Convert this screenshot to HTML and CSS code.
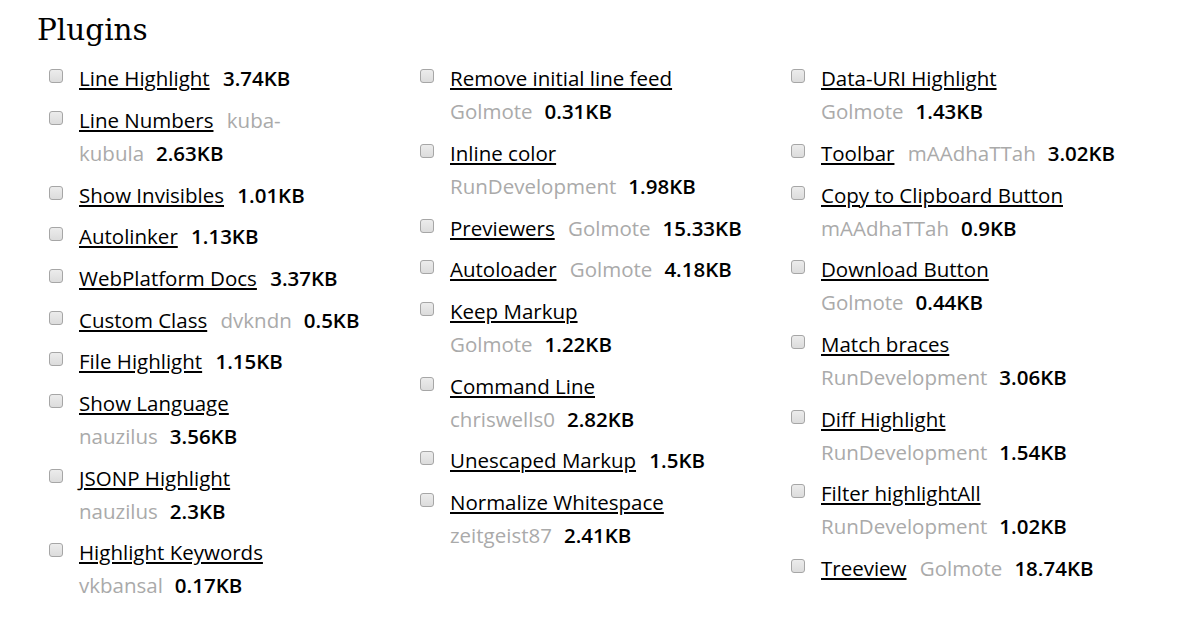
FILE: index.html
```html
<!DOCTYPE html>
<html>
<head>
<meta charset="utf-8">
<title>Plugins</title>
<link rel="stylesheet" href="styles.css">
</head>
<body>
<section class="options">
  <h1 class="title">Plugins</h1>
  <div class="grid">
    <div class="col">
      <label class="item"><span class="box"></span><span class="txt"><a class="name" href="#">Line Highlight</a> <strong class="size">3.74KB</strong></span></label>
      <label class="item"><span class="box"></span><span class="txt"><a class="name" href="#">Line Numbers</a> <span class="owner">kuba-</span><span class="owner">kubula</span><strong class="size">2.63KB</strong></span></label>
      <label class="item"><span class="box"></span><span class="txt"><a class="name" href="#">Show Invisibles</a> <strong class="size">1.01KB</strong></span></label>
      <label class="item"><span class="box"></span><span class="txt"><a class="name" href="#">Autolinker</a> <strong class="size">1.13KB</strong></span></label>
      <label class="item"><span class="box"></span><span class="txt"><a class="name" href="#">WebPlatform Docs</a> <strong class="size">3.37KB</strong></span></label>
      <label class="item"><span class="box"></span><span class="txt"><a class="name" href="#">Custom Class</a> <span class="owner">dvkndn</span><strong class="size">0.5KB</strong></span></label>
      <label class="item"><span class="box"></span><span class="txt"><a class="name" href="#">File Highlight</a> <strong class="size">1.15KB</strong></span></label>
      <label class="item"><span class="box"></span><span class="txt"><a class="name" href="#">Show Language</a> <span class="owner">nauzilus</span><strong class="size">3.56KB</strong></span></label>
      <label class="item"><span class="box"></span><span class="txt"><a class="name" href="#">JSONP Highlight</a> <span class="owner">nauzilus</span><strong class="size">2.3KB</strong></span></label>
      <label class="item"><span class="box"></span><span class="txt"><a class="name" href="#">Highlight Keywords</a> <span class="owner">vkbansal</span><strong class="size">0.17KB</strong></span></label>
    </div>
    <div class="col">
      <label class="item"><span class="box"></span><span class="txt"><a class="name" href="#">Remove initial line feed</a> <span class="owner">Golmote</span><strong class="size">0.31KB</strong></span></label>
      <label class="item"><span class="box"></span><span class="txt"><a class="name" href="#">Inline color</a> <span class="owner">RunDevelopment</span><strong class="size">1.98KB</strong></span></label>
      <label class="item"><span class="box"></span><span class="txt"><a class="name" href="#">Previewers</a> <span class="owner">Golmote</span><strong class="size">15.33KB</strong></span></label>
      <label class="item"><span class="box"></span><span class="txt"><a class="name" href="#">Autoloader</a> <span class="owner">Golmote</span><strong class="size">4.18KB</strong></span></label>
      <label class="item"><span class="box"></span><span class="txt"><a class="name" href="#">Keep Markup</a> <span class="owner">Golmote</span><strong class="size">1.22KB</strong></span></label>
      <label class="item"><span class="box"></span><span class="txt"><a class="name" href="#">Command Line</a> <span class="owner">chriswells0</span><strong class="size">2.82KB</strong></span></label>
      <label class="item"><span class="box"></span><span class="txt"><a class="name" href="#">Unescaped Markup</a> <strong class="size">1.5KB</strong></span></label>
      <label class="item"><span class="box"></span><span class="txt"><a class="name" href="#">Normalize Whitespace</a> <span class="owner">zeitgeist87</span><strong class="size">2.41KB</strong></span></label>
    </div>
    <div class="col">
      <label class="item"><span class="box"></span><span class="txt"><a class="name" href="#">Data-URI Highlight</a> <span class="owner">Golmote</span><strong class="size">1.43KB</strong></span></label>
      <label class="item"><span class="box"></span><span class="txt"><a class="name" href="#">Toolbar</a> <span class="owner">mAAdhaTTah</span><strong class="size">3.02KB</strong></span></label>
      <label class="item"><span class="box"></span><span class="txt"><a class="name" href="#">Copy to Clipboard Button</a> <span class="owner">mAAdhaTTah</span><strong class="size">0.9KB</strong></span></label>
      <label class="item"><span class="box"></span><span class="txt"><a class="name" href="#">Download Button</a> <span class="owner">Golmote</span><strong class="size">0.44KB</strong></span></label>
      <label class="item"><span class="box"></span><span class="txt"><a class="name" href="#">Match braces</a> <span class="owner">RunDevelopment</span><strong class="size">3.06KB</strong></span></label>
      <label class="item"><span class="box"></span><span class="txt"><a class="name" href="#">Diff Highlight</a> <span class="owner">RunDevelopment</span><strong class="size">1.54KB</strong></span></label>
      <label class="item"><span class="box"></span><span class="txt"><a class="name" href="#">Filter highlightAll</a> <span class="owner">RunDevelopment</span><strong class="size">1.02KB</strong></span></label>
      <label class="item"><span class="box"></span><span class="txt"><a class="name" href="#">Treeview</a> <span class="owner">Golmote</span><strong class="size">18.74KB</strong></span></label>
    </div>
  </div>
</section>
</body>
</html>
```
FILE: styles.css
```css
html, body {
  margin: 0;
  padding: 0;
  background: #fff;
}
body {
  font-family: "Open Sans", "Noto Sans", sans-serif;
  color: #000;
}
.options {
  padding: 13px 0 0 0;
}
.title {
  margin: 0 0 11px 0;
  padding-left: 37px;
  font-family: "DejaVu Serif", "Liberation Serif", serif;
  font-weight: normal;
  font-size: 29.5px;
  line-height: 34px;
  color: #000;
}
.grid {
  display: grid;
  grid-template-columns: repeat(3, 335px);
  column-gap: 36px;
  padding-left: 48px;
  align-items: start;
}
.col {
  display: flex;
  flex-direction: column;
}
.item {
  display: grid;
  grid-template-columns: 31px 297px;
  padding: 4.33px 0 4.34px 0;
  font-size: 20.5px;
  line-height: 33px;
  cursor: pointer;
}
.box {
  box-sizing: border-box;
  width: 14px;
  height: 14px;
  margin: 7px 0 0 0.5px;
  border: 1px solid #a6a6a6;
  border-radius: 3px;
  background: linear-gradient(#ececec, #dcdcdc);
}
.txt {
  display: block;
}
.name {
  color: #000;
  text-decoration: underline;
  text-decoration-thickness: 2px;
  text-underline-offset: 2px;
  margin-right: 8px;
}
.owner {
  color: #aaa;
}
.size {
  font-weight: 600;
  color: #000;
}
.owner + .size {
  margin-left: 12px;
}
```
